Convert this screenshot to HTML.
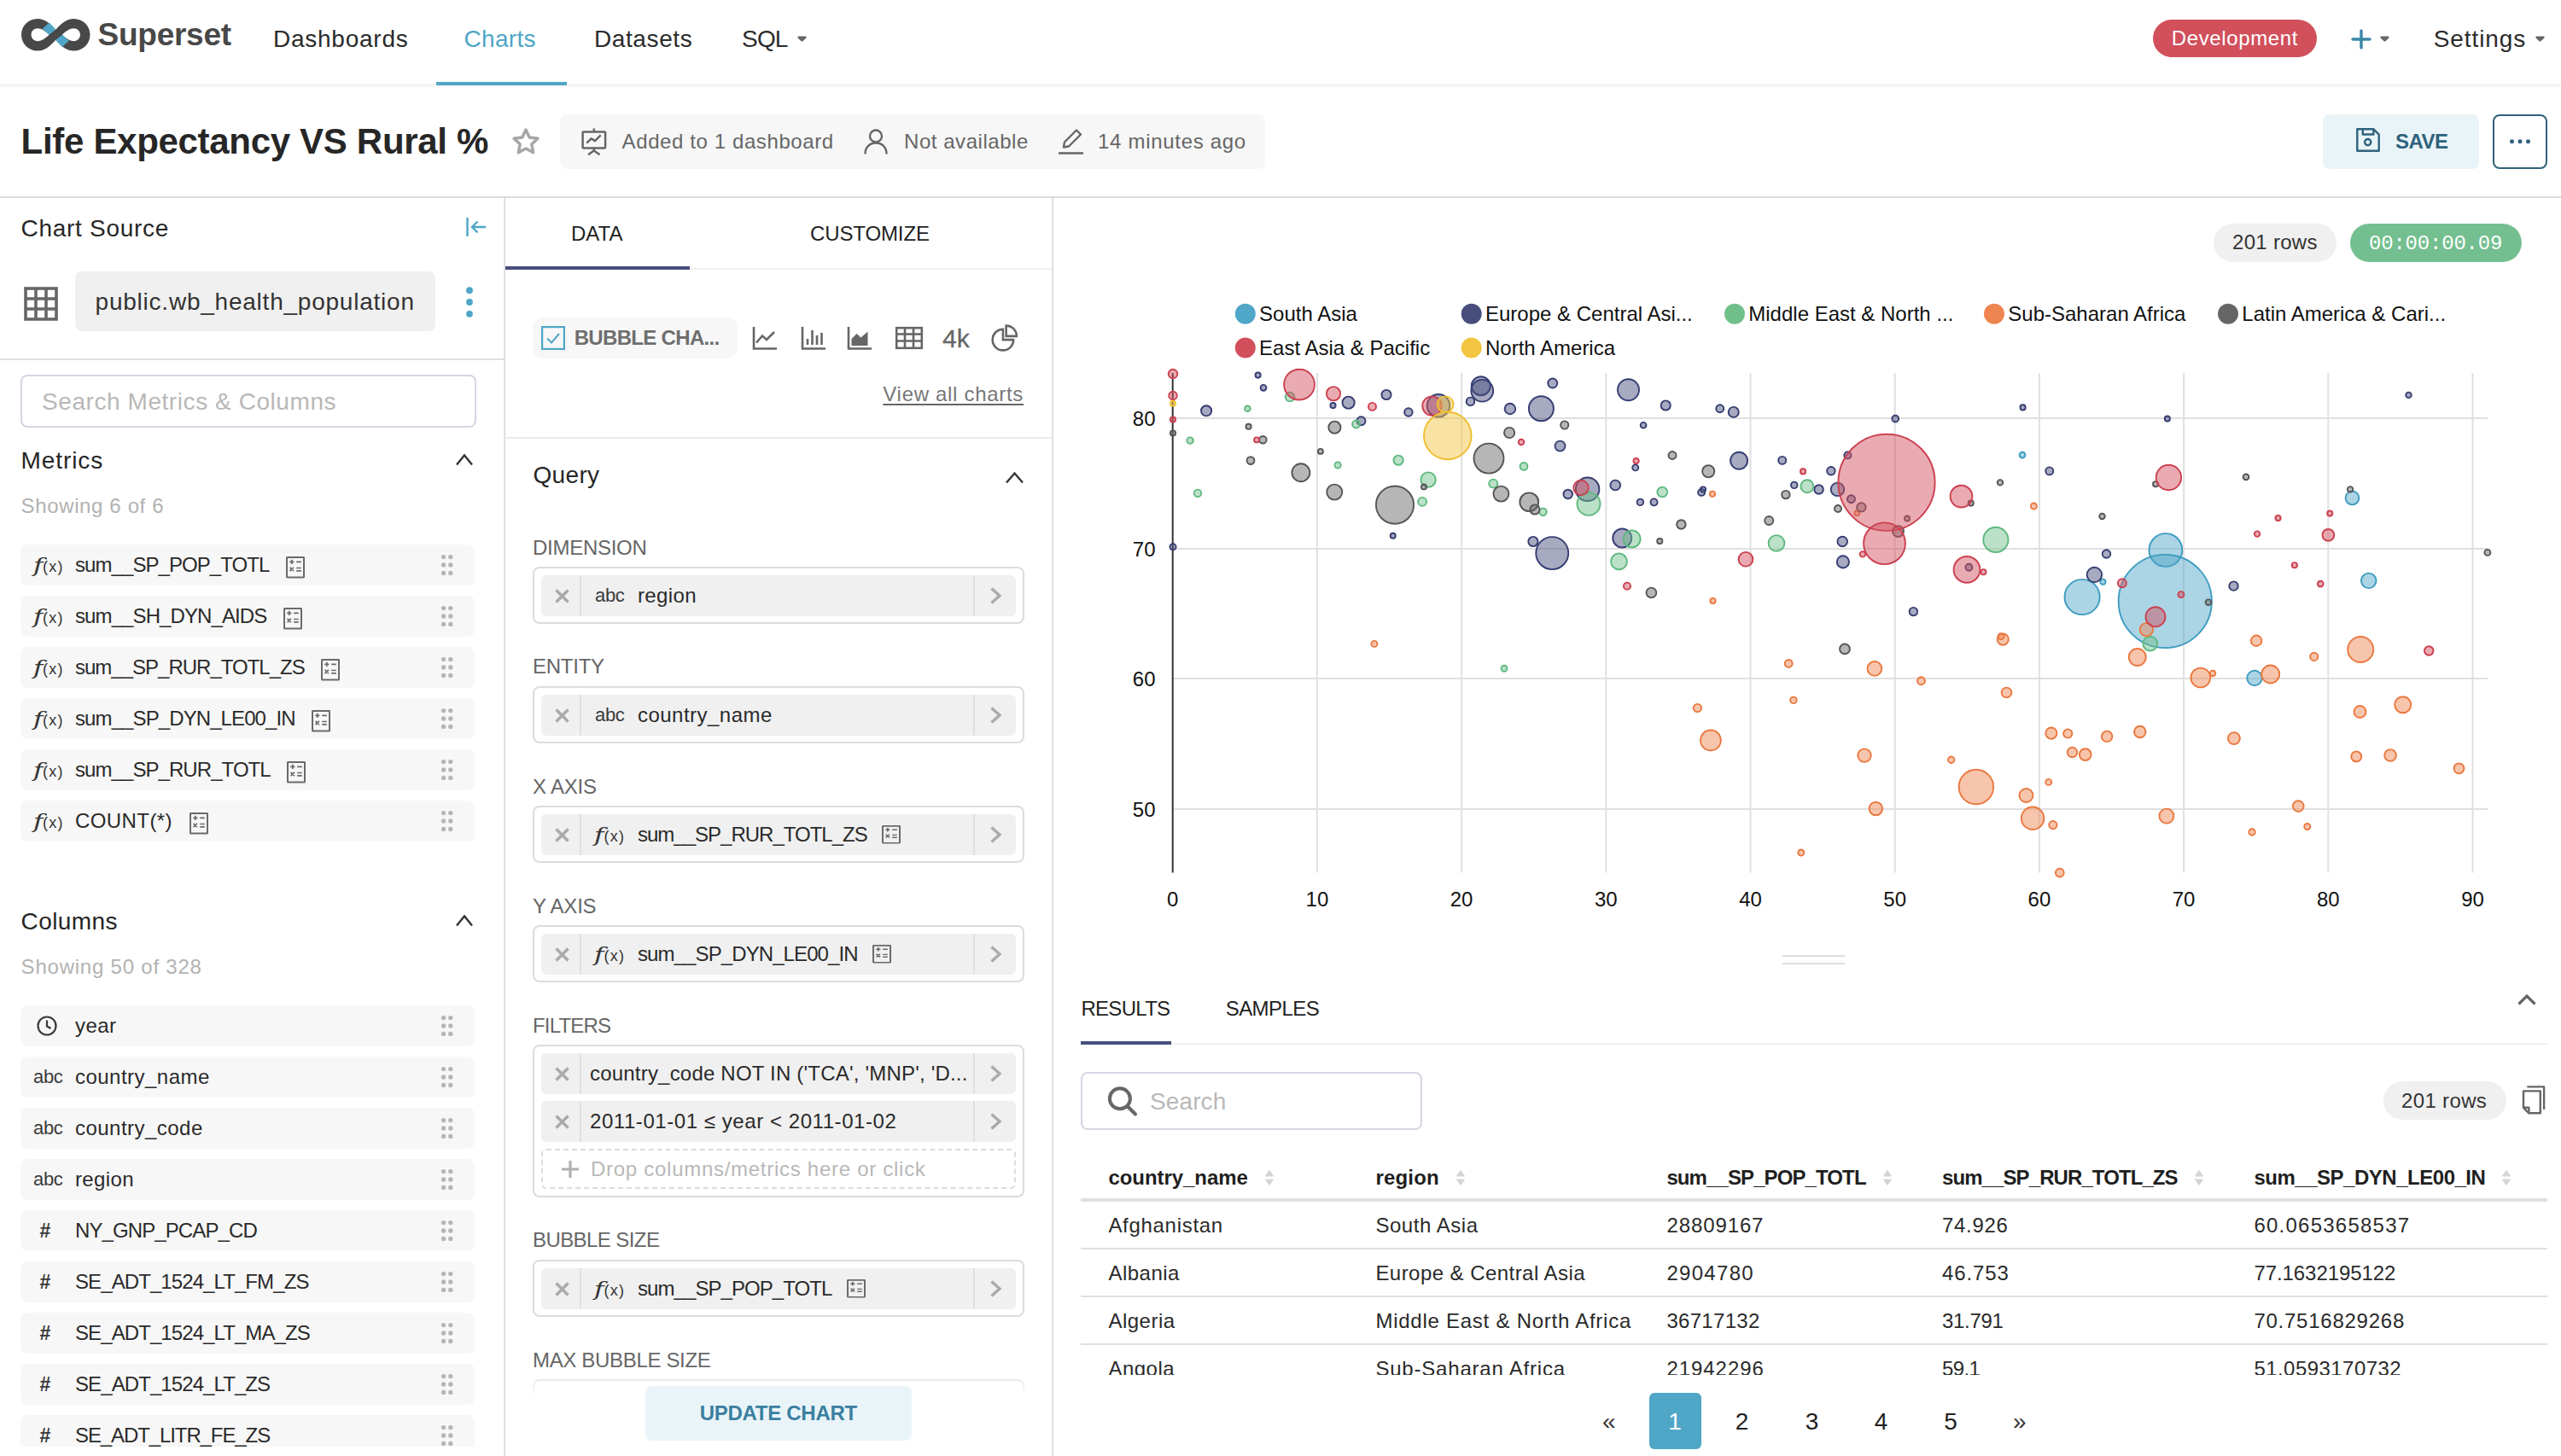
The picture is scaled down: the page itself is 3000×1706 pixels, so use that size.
<!DOCTYPE html><html><head><meta charset="utf-8"><title>Life Expectancy VS Rural %</title><style>
*{box-sizing:border-box;margin:0;padding:0}
html,body{width:3000px;height:1706px;overflow:hidden;background:#fff}
body{font-family:"Liberation Sans",sans-serif;color:#1f1f1f;position:relative}
.a{position:absolute}
.t{position:absolute;white-space:nowrap;height:40px;line-height:40px}
.f24{font-size:24px}.f28{font-size:28px}
.b{font-weight:bold}
.g6{color:#666}
.item{position:absolute;left:24px;width:532px;height:48px;background:#f7f7f7;border-radius:8px}
.item .lbl{position:absolute;left:64px;top:4px;height:40px;line-height:40px;font-size:24px;white-space:nowrap;color:#2a2a2a}
.ctl{position:absolute;left:32px;width:576px;border:2px solid #dcdcdc;border-radius:8px;background:#fff}
.pill{position:absolute;left:8px;width:556px;height:48px;background:#f0f0f0;border-radius:6px}
.pill .x{position:absolute;left:0;top:0;width:47px;height:48px;border-right:2px solid #e0e0e0}
.pill .r{position:absolute;right:0;top:0;width:50px;height:48px;border-left:2px solid #e0e0e0}
.pill .lbl{position:absolute;top:4px;height:40px;line-height:40px;font-size:24px;white-space:nowrap;color:#2a2a2a}
.clab{position:absolute;left:32px;height:40px;line-height:40px;font-size:24px;color:#666;white-space:nowrap}
svg{position:absolute;overflow:visible}
</style></head><body>
<div class="a" style="left:0;top:0;width:3000px;height:100px;background:#fff"></div>
<div class="a" style="left:0;top:98px;width:3000px;height:4px;background:#f5f5f5"></div>
<svg style="left:24px;top:21px" width="82.5" height="39.5" viewBox="0 0 82 40" preserveAspectRatio="none">
<path d="M20 1 C9 1 1 9.5 1 20 C1 30.5 9 39 20 39 C28 39 34 34 41 26 C48 34 54 39 62 39 C73 39 81 30.500 81 20 C81 9.500 73 1 62 1 C54 1 48 6 41 14 C34 6 28 1 20 1 Z M20 12.500 C25 12.500 29 16 33.500 20 C29 24 25 27.500 20 27.500 C15.500 27.500 12.500 24 12.500 20 C12.500 16 15.500 12.500 20 12.500 Z M62 12.500 C66.500 12.500 69.500 16 69.500 20 C69.500 24 66.500 27.500 62 27.500 C57 27.500 53 24 48.500 20 C53 16 57 12.500 62 12.500 Z" fill="#484848" fill-rule="evenodd"/>
<path d="M33.500 5.500 L41 14 L33.500 20 L25.500 12.800 Z" fill="#4fa6c6"/>
<path d="M48.500 34.500 L41 26 L48.500 20 L56.500 27.200 Z" fill="#4fa6c6"/>
</svg>
<div class="t" style="top:21.0px;font-size:37px;left:114.5px;letter-spacing:-0.25px;color:#484848;font-weight:bold;">Superset</div>
<div class="t" style="top:26.0px;font-size:28px;left:320.0px;letter-spacing:0.75px;color:#2b2b2b;">Dashboards</div>
<div class="t" style="top:26.0px;font-size:28px;left:543.5px;letter-spacing:0.3px;color:#4fa6c6;">Charts</div>
<div class="a" style="left:511px;top:96px;width:153px;height:4px;background:#4fa6c6"></div>
<div class="t" style="top:26.0px;font-size:28px;left:696.0px;letter-spacing:0.6px;color:#2b2b2b;">Datasets</div>
<div class="t" style="top:26.0px;font-size:28px;left:869.0px;letter-spacing:-0.8px;color:#2b2b2b;">SQL</div>
<svg style="left:934px;top:42px" width="11" height="7" viewBox="0 0 11 7"><path d="M1.700 1.700 H9.300 L5.500 5.300 Z" fill="#666" stroke="#666" stroke-width="2.600" stroke-linejoin="round"/></svg>
<div class="a" style="left:2522px;top:23px;width:192px;height:44px;border-radius:22px;background:#d1505c"></div>
<div class="t" style="top:25.0px;font-size:24px;left:2543.7px;letter-spacing:0.63px;color:#fff;">Development</div>
<svg style="left:2754px;top:34px" width="24" height="24" viewBox="0 0 24 24" fill="none" stroke="#3a87a8" stroke-width="3.4" stroke-linecap="round"><path d="M12 2v20M2 12h20"/></svg>
<svg style="left:2788px;top:42px" width="11" height="7" viewBox="0 0 11 7"><path d="M1.700 1.700 H9.300 L5.500 5.300 Z" fill="#666" stroke="#666" stroke-width="2.600" stroke-linejoin="round"/></svg>
<div class="t" style="top:26.0px;font-size:28px;left:2850.8px;letter-spacing:0.9px;color:#2b2b2b;">Settings</div>
<svg style="left:2970px;top:42px" width="11" height="7" viewBox="0 0 11 7"><path d="M1.700 1.700 H9.300 L5.500 5.300 Z" fill="#666" stroke="#666" stroke-width="2.600" stroke-linejoin="round"/></svg>
<div class="t" style="top:146.0px;font-size:42px;left:24.6px;letter-spacing:-0.31px;color:#262626;font-weight:bold;height:60px;line-height:60px;margin-top:-10px;">Life Expectancy VS Rural %</div>
<svg style="left:600px;top:150px" width="32" height="31" viewBox="0 0 32 31" fill="none" stroke="#a6a6a6" stroke-width="3.4" stroke-linejoin="round"><path d="M16 2 L20.2 11 L30 12.300 L22.800 19 L24.700 28.800 L16 24 L7.300 28.800 L9.200 19 L2 12.300 L11.800 11 Z"/></svg>
<div class="a" style="left:656px;top:134px;width:826px;height:64px;border-radius:8px;background:#f7f7f7"></div>
<svg style="left:680px;top:150px" width="32" height="32" viewBox="0 0 32 32" fill="none" stroke="#666" stroke-width="2.5" stroke-linejoin="round"><rect x="2.6" y="4.5" width="26.500" height="19" rx="1"/><path d="M15.800 0.500v4M15.800 23.500v4M9 31.200l6.800-4.700 6.800 4.700M7.200 17.600l5.400-5.300 4.300 2.800 6.800-6.800"/></svg>
<div class="t" style="top:146.0px;font-size:24px;left:728.6px;letter-spacing:0.6px;color:#666;">Added to 1 dashboard</div>
<svg style="left:1012px;top:151px" width="28" height="30" viewBox="0 0 28 30" fill="none" stroke="#666" stroke-width="2.4"><circle cx="14" cy="8.500" r="7"/><path d="M1.500 29.500 C1.500 21 7 16.500 14 16.500 C21 16.500 26.500 21 26.500 29.500"/></svg>
<div class="t" style="top:146.0px;font-size:24px;left:1059.0px;letter-spacing:0.55px;color:#666;">Not available</div>
<svg style="left:1240px;top:151px" width="29" height="30" viewBox="0 0 29 30" fill="none" stroke="#666" stroke-width="2.4" stroke-linejoin="round"><path d="M0 28.500h29M6 21.500l1-6L21 1.500l5 5L12 20.500z"/></svg>
<div class="t" style="top:146.0px;font-size:24px;left:1286.0px;letter-spacing:0.7px;color:#666;">14 minutes ago</div>
<div class="a" style="left:2721px;top:134px;width:183px;height:64px;border-radius:8px;background:#e9f4f8"></div>
<svg style="left:2760px;top:150px" width="28" height="28" viewBox="0 0 28 28" fill="none" stroke="#2f627c" stroke-width="2.4" stroke-linejoin="round"><path d="M1.300 1.300h19.200l6.200 6.200v19.200h-25.400zM7.800 1.300v6.200h12.600V1.300"/><circle cx="13.700" cy="16.600" r="3.600"/></svg>
<div class="t" style="top:146.0px;font-size:24px;left:2806.0px;letter-spacing:-0.5px;color:#2f627c;font-weight:bold;">SAVE</div>
<div class="a" style="left:2920px;top:134px;width:64px;height:64px;border-radius:8px;border:2px solid #2f627c;background:#fff"></div>
<svg style="left:2940px;top:163px" width="26" height="6" viewBox="0 0 26 6" fill="#2f627c"><circle cx="2.500" cy="2.800" r="2.500"/><circle cx="12" cy="2.800" r="2.500"/><circle cx="21.500" cy="2.800" r="2.500"/></svg>
<div class="a" style="left:0;top:230px;width:3000px;height:2px;background:#dcdcdc"></div>
<div class="a" style="left:0;top:232px;width:592px;height:1474px;border-right:2px solid #e0e0e0;overflow:hidden" id="left">
<div class="t" style="top:16.0px;font-size:28px;left:24.6px;letter-spacing:0.71px;color:#262626;">Chart Source</div>
<svg style="left:546px;top:23px" width="23" height="22" viewBox="0 0 23 22" fill="none" stroke="#4fa6c6" stroke-width="2.4"><path d="M1.500 0v22M23 11H7M13.500 4.500L7 11l6.500 6.500"/></svg>
<svg style="left:28px;top:104px" width="40" height="40" viewBox="0 0 40 40" fill="none" stroke="#666" stroke-width="3.6"><rect x="2" y="2" width="36" height="36"/><path d="M2 14h36M2 26h36M14 2v36M26 2v36"/></svg>
<div class="a" style="left:88px;top:86px;width:422px;height:70px;border-radius:8px;background:#f0f0f0"></div>
<div class="t" style="top:102.0px;font-size:28px;left:111.6px;letter-spacing:0.77px;color:#333;">public.wb_health_population</div>
<svg style="left:544px;top:104px" width="12" height="36" viewBox="0 0 12 36" fill="#4fa6c6"><circle cx="6" cy="4.2" r="3.9"/><circle cx="6" cy="18" r="3.9"/><circle cx="6" cy="31.8" r="3.9"/></svg>
<div class="a" style="left:0;top:188px;width:590px;height:2px;background:#e0e0e0"></div>
<div class="a" style="left:24px;top:207px;width:534px;height:62px;border-radius:8px;border:2px solid #d5d6e2;background:#fff"></div>
<div class="t" style="top:219.0px;font-size:28px;left:49.0px;letter-spacing:0.57px;color:#b8b8b8;">Search Metrics &amp; Columns</div>
<div class="t" style="top:288.0px;font-size:28px;left:24.6px;letter-spacing:0.9px;color:#262626;">Metrics</div>
<svg style="left:534px;top:300px" width="20" height="13" viewBox="0 0 20 13" fill="none" stroke="#333" stroke-width="2.4"><path d="M1 12.5 L10.0 1.5 L19 12.5"/></svg>
<div class="t" style="top:341.0px;font-size:24px;left:24.6px;letter-spacing:0.63px;color:#b2b2b2;">Showing 6 of 6</div>
<div class="item" style="top:406px"><div class="lbl" style="letter-spacing:-0.93px">sum__SP_POP_TOTL</div></div>
<div class="a" style="left:40.5px;top:410px;height:40px;line-height:40px;white-space:nowrap;color:#333"><span style="font-family:'DejaVu Serif',serif;font-style:italic;font-size:23px;display:inline-block;transform:scaleX(1.35);transform-origin:0 50%;margin-right:3px;margin-left:-2px">f</span><span style="font-size:18px;letter-spacing:1.3px;position:relative;top:0px">(x)</span></div>
<svg style="left:335.06375px;top:419.6px" width="22" height="25.600" viewBox="0 0 22 25.600" fill="none" stroke="#6a6a6a" stroke-width="2"><rect x="1" y="1" width="20" height="23.600" rx="0.500"/><path d="M4.200 6.300h5.200M6.800 3.700v5.200M12.200 6.300h5.600M4.600 12.800l4.400 4.400M9 12.800l-4.400 4.400M12.200 13.500h5.600M12.200 16.800h5.600" stroke-width="1.700"/></svg>
<svg style="left:516px;top:417px" width="16" height="26" viewBox="0 0 16 26" fill="#b6b6b6"><circle cx="3.6" cy="3.6" r="2.700"/><circle cx="11.8" cy="3.6" r="2.700"/><circle cx="3.6" cy="13" r="2.700"/><circle cx="11.8" cy="13" r="2.700"/><circle cx="3.6" cy="22.4" r="2.700"/><circle cx="11.8" cy="22.4" r="2.700"/></svg>
<div class="item" style="top:466px"><div class="lbl" style="letter-spacing:-0.9px">sum__SH_DYN_AIDS</div></div>
<div class="a" style="left:40.5px;top:470px;height:40px;line-height:40px;white-space:nowrap;color:#333"><span style="font-family:'DejaVu Serif',serif;font-style:italic;font-size:23px;display:inline-block;transform:scaleX(1.35);transform-origin:0 50%;margin-right:3px;margin-left:-2px">f</span><span style="font-size:18px;letter-spacing:1.3px;position:relative;top:0px">(x)</span></div>
<svg style="left:331.965625px;top:479.6px" width="22" height="25.600" viewBox="0 0 22 25.600" fill="none" stroke="#6a6a6a" stroke-width="2"><rect x="1" y="1" width="20" height="23.600" rx="0.500"/><path d="M4.200 6.300h5.200M6.800 3.700v5.200M12.200 6.300h5.600M4.600 12.800l4.400 4.400M9 12.800l-4.400 4.400M12.200 13.500h5.600M12.200 16.800h5.600" stroke-width="1.700"/></svg>
<svg style="left:516px;top:477px" width="16" height="26" viewBox="0 0 16 26" fill="#b6b6b6"><circle cx="3.6" cy="3.6" r="2.700"/><circle cx="11.8" cy="3.6" r="2.700"/><circle cx="3.6" cy="13" r="2.700"/><circle cx="11.8" cy="13" r="2.700"/><circle cx="3.6" cy="22.4" r="2.700"/><circle cx="11.8" cy="22.4" r="2.700"/></svg>
<div class="item" style="top:526px"><div class="lbl" style="letter-spacing:-1.0px">sum__SP_RUR_TOTL_ZS</div></div>
<div class="a" style="left:40.5px;top:530px;height:40px;line-height:40px;white-space:nowrap;color:#333"><span style="font-family:'DejaVu Serif',serif;font-style:italic;font-size:23px;display:inline-block;transform:scaleX(1.35);transform-origin:0 50%;margin-right:3px;margin-left:-2px">f</span><span style="font-size:18px;letter-spacing:1.3px;position:relative;top:0px">(x)</span></div>
<svg style="left:376.240625px;top:539.6px" width="22" height="25.600" viewBox="0 0 22 25.600" fill="none" stroke="#6a6a6a" stroke-width="2"><rect x="1" y="1" width="20" height="23.600" rx="0.500"/><path d="M4.200 6.300h5.200M6.800 3.700v5.200M12.200 6.300h5.600M4.600 12.800l4.400 4.400M9 12.800l-4.400 4.400M12.200 13.500h5.600M12.200 16.800h5.600" stroke-width="1.700"/></svg>
<svg style="left:516px;top:537px" width="16" height="26" viewBox="0 0 16 26" fill="#b6b6b6"><circle cx="3.6" cy="3.6" r="2.700"/><circle cx="11.8" cy="3.6" r="2.700"/><circle cx="3.6" cy="13" r="2.700"/><circle cx="11.8" cy="13" r="2.700"/><circle cx="3.6" cy="22.4" r="2.700"/><circle cx="11.8" cy="22.4" r="2.700"/></svg>
<div class="item" style="top:586px"><div class="lbl" style="letter-spacing:-0.9px">sum__SP_DYN_LE00_IN</div></div>
<div class="a" style="left:40.5px;top:590px;height:40px;line-height:40px;white-space:nowrap;color:#333"><span style="font-family:'DejaVu Serif',serif;font-style:italic;font-size:23px;display:inline-block;transform:scaleX(1.35);transform-origin:0 50%;margin-right:3px;margin-left:-2px">f</span><span style="font-size:18px;letter-spacing:1.3px;position:relative;top:0px">(x)</span></div>
<svg style="left:365.3125px;top:599.6px" width="22" height="25.600" viewBox="0 0 22 25.600" fill="none" stroke="#6a6a6a" stroke-width="2"><rect x="1" y="1" width="20" height="23.600" rx="0.500"/><path d="M4.200 6.300h5.200M6.800 3.700v5.200M12.200 6.300h5.600M4.600 12.800l4.400 4.400M9 12.800l-4.400 4.400M12.200 13.500h5.600M12.200 16.800h5.600" stroke-width="1.700"/></svg>
<svg style="left:516px;top:597px" width="16" height="26" viewBox="0 0 16 26" fill="#b6b6b6"><circle cx="3.6" cy="3.6" r="2.700"/><circle cx="11.8" cy="3.6" r="2.700"/><circle cx="3.6" cy="13" r="2.700"/><circle cx="11.8" cy="13" r="2.700"/><circle cx="3.6" cy="22.4" r="2.700"/><circle cx="11.8" cy="22.4" r="2.700"/></svg>
<div class="item" style="top:646px"><div class="lbl" style="letter-spacing:-0.93px">sum__SP_RUR_TOTL</div></div>
<div class="a" style="left:40.5px;top:650px;height:40px;line-height:40px;white-space:nowrap;color:#333"><span style="font-family:'DejaVu Serif',serif;font-style:italic;font-size:23px;display:inline-block;transform:scaleX(1.35);transform-origin:0 50%;margin-right:3px;margin-left:-2px">f</span><span style="font-size:18px;letter-spacing:1.3px;position:relative;top:0px">(x)</span></div>
<svg style="left:336.345px;top:659.6px" width="22" height="25.600" viewBox="0 0 22 25.600" fill="none" stroke="#6a6a6a" stroke-width="2"><rect x="1" y="1" width="20" height="23.600" rx="0.500"/><path d="M4.200 6.300h5.200M6.800 3.700v5.200M12.200 6.300h5.600M4.600 12.800l4.400 4.400M9 12.800l-4.400 4.400M12.200 13.500h5.600M12.200 16.800h5.600" stroke-width="1.700"/></svg>
<svg style="left:516px;top:657px" width="16" height="26" viewBox="0 0 16 26" fill="#b6b6b6"><circle cx="3.6" cy="3.6" r="2.700"/><circle cx="11.8" cy="3.6" r="2.700"/><circle cx="3.6" cy="13" r="2.700"/><circle cx="11.8" cy="13" r="2.700"/><circle cx="3.6" cy="22.4" r="2.700"/><circle cx="11.8" cy="22.4" r="2.700"/></svg>
<div class="item" style="top:706px"><div class="lbl" style="letter-spacing:0.42px">COUNT(*)</div></div>
<div class="a" style="left:40.5px;top:710px;height:40px;line-height:40px;white-space:nowrap;color:#333"><span style="font-family:'DejaVu Serif',serif;font-style:italic;font-size:23px;display:inline-block;transform:scaleX(1.35);transform-origin:0 50%;margin-right:3px;margin-left:-2px">f</span><span style="font-size:18px;letter-spacing:1.3px;position:relative;top:0px">(x)</span></div>
<svg style="left:221.61624999999998px;top:719.6px" width="22" height="25.600" viewBox="0 0 22 25.600" fill="none" stroke="#6a6a6a" stroke-width="2"><rect x="1" y="1" width="20" height="23.600" rx="0.500"/><path d="M4.200 6.300h5.200M6.800 3.700v5.200M12.200 6.300h5.600M4.600 12.800l4.400 4.400M9 12.800l-4.400 4.400M12.200 13.500h5.600M12.200 16.800h5.600" stroke-width="1.700"/></svg>
<svg style="left:516px;top:717px" width="16" height="26" viewBox="0 0 16 26" fill="#b6b6b6"><circle cx="3.6" cy="3.6" r="2.700"/><circle cx="11.8" cy="3.6" r="2.700"/><circle cx="3.6" cy="13" r="2.700"/><circle cx="11.8" cy="13" r="2.700"/><circle cx="3.6" cy="22.4" r="2.700"/><circle cx="11.8" cy="22.4" r="2.700"/></svg>
<div class="t" style="top:828.0px;font-size:28px;left:24.6px;letter-spacing:0.41px;color:#262626;">Columns</div>
<svg style="left:534px;top:840px" width="20" height="13" viewBox="0 0 20 13" fill="none" stroke="#333" stroke-width="2.4"><path d="M1 12.5 L10.0 1.5 L19 12.5"/></svg>
<div class="t" style="top:881.0px;font-size:24px;left:24.6px;letter-spacing:0.78px;color:#b2b2b2;">Showing 50 of 328</div>
<div class="item" style="top:946px"><div class="lbl" style="letter-spacing:0.4px">year</div></div>
<svg style="left:43px;top:958px" width="24" height="24" viewBox="0 0 24 24" fill="none" stroke="#3a3a3a" stroke-width="2.2"><circle cx="12" cy="12" r="10.500"/><path d="M12 5.500V12.500l4.500 2.500"/></svg>
<svg style="left:516px;top:957px" width="16" height="26" viewBox="0 0 16 26" fill="#b6b6b6"><circle cx="3.6" cy="3.6" r="2.700"/><circle cx="11.8" cy="3.6" r="2.700"/><circle cx="3.6" cy="13" r="2.700"/><circle cx="11.8" cy="13" r="2.700"/><circle cx="3.6" cy="22.4" r="2.700"/><circle cx="11.8" cy="22.4" r="2.700"/></svg>
<div class="item" style="top:1006px"><div class="lbl" style="letter-spacing:0.47px">country_name</div></div>
<div class="t" style="top:1010.0px;font-size:22px;left:39.0px;letter-spacing:-0.3px;color:#3a3a3a;">abc</div>
<svg style="left:516px;top:1017px" width="16" height="26" viewBox="0 0 16 26" fill="#b6b6b6"><circle cx="3.6" cy="3.6" r="2.700"/><circle cx="11.8" cy="3.6" r="2.700"/><circle cx="3.6" cy="13" r="2.700"/><circle cx="11.8" cy="13" r="2.700"/><circle cx="3.6" cy="22.4" r="2.700"/><circle cx="11.8" cy="22.4" r="2.700"/></svg>
<div class="item" style="top:1066px"><div class="lbl" style="letter-spacing:0.47px">country_code</div></div>
<div class="t" style="top:1070.0px;font-size:22px;left:39.0px;letter-spacing:-0.3px;color:#3a3a3a;">abc</div>
<svg style="left:516px;top:1077px" width="16" height="26" viewBox="0 0 16 26" fill="#b6b6b6"><circle cx="3.6" cy="3.6" r="2.700"/><circle cx="11.8" cy="3.6" r="2.700"/><circle cx="3.6" cy="13" r="2.700"/><circle cx="11.8" cy="13" r="2.700"/><circle cx="3.6" cy="22.4" r="2.700"/><circle cx="11.8" cy="22.4" r="2.700"/></svg>
<div class="item" style="top:1126px"><div class="lbl" style="letter-spacing:0.38px">region</div></div>
<div class="t" style="top:1130.0px;font-size:22px;left:39.0px;letter-spacing:-0.3px;color:#3a3a3a;">abc</div>
<svg style="left:516px;top:1137px" width="16" height="26" viewBox="0 0 16 26" fill="#b6b6b6"><circle cx="3.6" cy="3.6" r="2.700"/><circle cx="11.8" cy="3.6" r="2.700"/><circle cx="3.6" cy="13" r="2.700"/><circle cx="11.8" cy="13" r="2.700"/><circle cx="3.6" cy="22.4" r="2.700"/><circle cx="11.8" cy="22.4" r="2.700"/></svg>
<div class="item" style="top:1186px"><div class="lbl" style="letter-spacing:-0.9px">NY_GNP_PCAP_CD</div></div>
<div class="t" style="top:1190.0px;font-size:23px;left:46.5px;color:#3a3a3a;font-weight:bold;">#</div>
<svg style="left:516px;top:1197px" width="16" height="26" viewBox="0 0 16 26" fill="#b6b6b6"><circle cx="3.6" cy="3.6" r="2.700"/><circle cx="11.8" cy="3.6" r="2.700"/><circle cx="3.6" cy="13" r="2.700"/><circle cx="11.8" cy="13" r="2.700"/><circle cx="3.6" cy="22.4" r="2.700"/><circle cx="11.8" cy="22.4" r="2.700"/></svg>
<div class="item" style="top:1246px"><div class="lbl" style="letter-spacing:-0.91px">SE_ADT_1524_LT_FM_ZS</div></div>
<div class="t" style="top:1250.0px;font-size:23px;left:46.5px;color:#3a3a3a;font-weight:bold;">#</div>
<svg style="left:516px;top:1257px" width="16" height="26" viewBox="0 0 16 26" fill="#b6b6b6"><circle cx="3.6" cy="3.6" r="2.700"/><circle cx="11.8" cy="3.6" r="2.700"/><circle cx="3.6" cy="13" r="2.700"/><circle cx="11.8" cy="13" r="2.700"/><circle cx="3.6" cy="22.4" r="2.700"/><circle cx="11.8" cy="22.4" r="2.700"/></svg>
<div class="item" style="top:1306px"><div class="lbl" style="letter-spacing:-0.91px">SE_ADT_1524_LT_MA_ZS</div></div>
<div class="t" style="top:1310.0px;font-size:23px;left:46.5px;color:#3a3a3a;font-weight:bold;">#</div>
<svg style="left:516px;top:1317px" width="16" height="26" viewBox="0 0 16 26" fill="#b6b6b6"><circle cx="3.6" cy="3.6" r="2.700"/><circle cx="11.8" cy="3.6" r="2.700"/><circle cx="3.6" cy="13" r="2.700"/><circle cx="11.8" cy="13" r="2.700"/><circle cx="3.6" cy="22.4" r="2.700"/><circle cx="11.8" cy="22.4" r="2.700"/></svg>
<div class="item" style="top:1366px"><div class="lbl" style="letter-spacing:-0.91px">SE_ADT_1524_LT_ZS</div></div>
<div class="t" style="top:1370.0px;font-size:23px;left:46.5px;color:#3a3a3a;font-weight:bold;">#</div>
<svg style="left:516px;top:1377px" width="16" height="26" viewBox="0 0 16 26" fill="#b6b6b6"><circle cx="3.6" cy="3.6" r="2.700"/><circle cx="11.8" cy="3.6" r="2.700"/><circle cx="3.6" cy="13" r="2.700"/><circle cx="11.8" cy="13" r="2.700"/><circle cx="3.6" cy="22.4" r="2.700"/><circle cx="11.8" cy="22.4" r="2.700"/></svg>
<div class="item" style="top:1426px"><div class="lbl" style="letter-spacing:-1.1px">SE_ADT_LITR_FE_ZS</div></div>
<div class="t" style="top:1430.0px;font-size:23px;left:46.5px;color:#3a3a3a;font-weight:bold;">#</div>
<svg style="left:516px;top:1437px" width="16" height="26" viewBox="0 0 16 26" fill="#b6b6b6"><circle cx="3.6" cy="3.6" r="2.700"/><circle cx="11.8" cy="3.6" r="2.700"/><circle cx="3.6" cy="13" r="2.700"/><circle cx="11.8" cy="13" r="2.700"/><circle cx="3.6" cy="22.4" r="2.700"/><circle cx="11.8" cy="22.4" r="2.700"/></svg>
<div class="a" style="left:0;top:1463px;width:590px;height:11px;background:#fff"></div>
</div>
<div class="a" style="left:592px;top:232px;width:642px;height:1474px;border-right:2px solid #e0e0e0;overflow:hidden" id="center">
<div class="t" style="top:22.0px;font-size:24px;left:77.0px;color:#1f1f1f;">DATA</div>
<div class="t" style="top:22.0px;font-size:24px;left:357.0px;letter-spacing:-0.12px;color:#1f1f1f;">CUSTOMIZE</div>
<div class="a" style="left:0;top:82px;width:640px;height:2px;background:#f0f0f0"></div>
<div class="a" style="left:0;top:80px;width:216px;height:4px;background:#484e7d"></div>
<div class="a" style="left:32px;top:140px;width:240px;height:48px;border-radius:12px;background:#f7f7f7"></div>
<svg style="left:42px;top:150px" width="28" height="28" viewBox="0 0 28 28" fill="none" stroke="#4fa6c6" stroke-width="2.2"><rect x="1.100" y="1.100" width="25.800" height="25.800"/><path d="M7 14.500l5 5 9-10.500" stroke-width="2"/></svg>
<div class="t" style="top:144.0px;font-size:24px;left:80.7px;letter-spacing:-0.68px;color:#6e6e6e;font-weight:bold;">BUBBLE CHA...</div>
<svg style="left:289px;top:149px" width="30" height="30" viewBox="0 0 30 30" fill="none" stroke="#666" stroke-width="2.6" ><path d="M2 2v25.500h27M5 20.500l7-8 5 4.500 9-9"/></svg>
<svg style="left:346px;top:149px" width="30" height="30" viewBox="0 0 30 30" fill="none" stroke="#666" stroke-width="2.6" ><path d="M2 2v25.500h27"/><path d="M8 23V16M13.500 23V6M19 23V12M24.500 23V9" stroke-width="2.6"/></svg>
<svg style="left:400px;top:149px" width="30" height="30" viewBox="0 0 30 30" fill="none" stroke="#666" stroke-width="2.6" ><path d="M2 2v25.500h27"/><path d="M5.500 24V16l6-6 5 4.500 8-7V24z" fill="#666" stroke="none"/></svg>
<svg style="left:457px;top:149px" width="32" height="30" viewBox="0 0 32 30" fill="none" stroke="#666" stroke-width="2.6" ><rect x="1.200" y="3.200" width="29.600" height="23.600"/><path d="M1 10.500h30M1 18.500h30M11 3v24M21 3v24"/></svg>
<div class="t" style="top:145.0px;font-size:30px;left:512.0px;color:#666;-webkit-text-stroke:0.3px #666;">4k</div>
<svg style="left:568px;top:148px" width="33" height="32" viewBox="0 0 31 30" fill="none" stroke="#666" stroke-width="2.400"><path d="M14 5.500A11.500 11.500 0 1 0 25.500 17H14z"/><path d="M17.500 1.500v11.500h11.500A11.500 11.500 0 0 0 17.500 1.500z"/></svg>
<div class="t" style="top:210.0px;font-size:24px;right:33.0px;letter-spacing:0.69px;color:#777;"><span style="text-decoration:underline;text-underline-offset:3px;text-decoration-thickness:2px;text-decoration-color:#666">View all charts</span></div>
<div class="a" style="left:0;top:280px;width:640px;height:2px;background:#ebebeb"></div>
<div class="t" style="top:304.5px;font-size:28px;left:32.5px;letter-spacing:0.33px;color:#262626;">Query</div>
<svg style="left:586px;top:321px" width="21" height="13" viewBox="0 0 21 13" fill="none" stroke="#333" stroke-width="2.4"><path d="M1 12.5 L10.5 1.5 L20 12.5"/></svg>
<div class="clab" style="top:390px;letter-spacing:-0.28px">DIMENSION</div>
<div class="ctl" style="top:432px;height:67px"><div class="pill" style="top:8px"><div class="x"><svg style="left:16px;top:15.5px" width="17" height="17" viewBox="0 0 17 17" fill="none" stroke="#aaaaaa" stroke-width="3.4"><path d="M1.500 1.500l14 14M15.500 1.500l-14 14"/></svg></div><div class="r"><svg style="left:18px;top:14px" width="13" height="20" viewBox="0 0 13 20" fill="none" stroke="#aaaaaa" stroke-width="3.4"><path d="M1.500 1.500l9.500 8.500-9.500 8.500"/></svg></div><div class="lbl" style="left:63px;font-size:22px;letter-spacing:-0.3px;color:#3a3a3a">abc</div><div class="lbl" style="left:113px;letter-spacing:0.38px">region</div></div></div>
<div class="clab" style="top:529px;letter-spacing:-0.26px">ENTITY</div>
<div class="ctl" style="top:572px;height:67px"><div class="pill" style="top:8px"><div class="x"><svg style="left:16px;top:15.5px" width="17" height="17" viewBox="0 0 17 17" fill="none" stroke="#aaaaaa" stroke-width="3.4"><path d="M1.500 1.500l14 14M15.500 1.500l-14 14"/></svg></div><div class="r"><svg style="left:18px;top:14px" width="13" height="20" viewBox="0 0 13 20" fill="none" stroke="#aaaaaa" stroke-width="3.4"><path d="M1.500 1.500l9.500 8.500-9.500 8.500"/></svg></div><div class="lbl" style="left:63px;font-size:22px;letter-spacing:-0.3px;color:#3a3a3a">abc</div><div class="lbl" style="left:113px;letter-spacing:0.47px">country_name</div></div></div>
<div class="clab" style="top:669.5px;letter-spacing:-0.2px">X AXIS</div>
<div class="ctl" style="top:712px;height:67px"><div class="pill" style="top:8px"><div class="x"><svg style="left:16px;top:15.5px" width="17" height="17" viewBox="0 0 17 17" fill="none" stroke="#aaaaaa" stroke-width="3.4"><path d="M1.500 1.500l14 14M15.500 1.500l-14 14"/></svg></div><div class="r"><svg style="left:18px;top:14px" width="13" height="20" viewBox="0 0 13 20" fill="none" stroke="#aaaaaa" stroke-width="3.4"><path d="M1.500 1.500l9.500 8.500-9.500 8.500"/></svg></div><div class="lbl" style="left:64px;color:#333"><span style="font-family:'DejaVu Serif',serif;font-style:italic;font-size:23px;display:inline-block;transform:scaleX(1.35);transform-origin:0 50%;margin-right:3px;margin-left:-2px">f</span><span style="font-size:18px;letter-spacing:1.3px;position:relative;top:0px">(x)</span></div><div class="lbl" style="left:113px;letter-spacing:-1.0px">sum__SP_RUR_TOTL_ZS</div><svg style="left:398.6px;top:13.200px" width="22" height="21.600" viewBox="0 0 22 25.600" preserveAspectRatio="none" fill="none" stroke="#6a6a6a" stroke-width="2"><rect x="1" y="1" width="20" height="23.600" rx="0.500"/><path d="M4.200 6.300h5.200M6.800 3.700v5.200M12.200 6.300h5.600M4.600 12.800l4.400 4.400M9 12.800l-4.400 4.400M12.200 13.500h5.600M12.200 16.800h5.600" stroke-width="1.700"/></svg></div></div>
<div class="clab" style="top:809.5px;letter-spacing:-0.2px">Y AXIS</div>
<div class="ctl" style="top:852px;height:67px"><div class="pill" style="top:8px"><div class="x"><svg style="left:16px;top:15.5px" width="17" height="17" viewBox="0 0 17 17" fill="none" stroke="#aaaaaa" stroke-width="3.4"><path d="M1.500 1.500l14 14M15.500 1.500l-14 14"/></svg></div><div class="r"><svg style="left:18px;top:14px" width="13" height="20" viewBox="0 0 13 20" fill="none" stroke="#aaaaaa" stroke-width="3.4"><path d="M1.500 1.500l9.500 8.500-9.500 8.500"/></svg></div><div class="lbl" style="left:64px;color:#333"><span style="font-family:'DejaVu Serif',serif;font-style:italic;font-size:23px;display:inline-block;transform:scaleX(1.35);transform-origin:0 50%;margin-right:3px;margin-left:-2px">f</span><span style="font-size:18px;letter-spacing:1.3px;position:relative;top:0px">(x)</span></div><div class="lbl" style="left:113px;letter-spacing:-0.9px">sum__SP_DYN_LE00_IN</div><svg style="left:387.7px;top:13.200px" width="22" height="21.600" viewBox="0 0 22 25.600" preserveAspectRatio="none" fill="none" stroke="#6a6a6a" stroke-width="2"><rect x="1" y="1" width="20" height="23.600" rx="0.500"/><path d="M4.200 6.300h5.200M6.800 3.700v5.200M12.200 6.300h5.600M4.600 12.800l4.400 4.400M9 12.800l-4.400 4.400M12.200 13.500h5.600M12.200 16.800h5.600" stroke-width="1.700"/></svg></div></div>
<div class="clab" style="top:949.5px;letter-spacing:-0.83px">FILTERS</div>
<div class="ctl" style="top:992px;height:179px"><div class="pill" style="top:8px"><div class="x"><svg style="left:16px;top:15.5px" width="17" height="17" viewBox="0 0 17 17" fill="none" stroke="#aaaaaa" stroke-width="3.4"><path d="M1.500 1.500l14 14M15.500 1.500l-14 14"/></svg></div><div class="r"><svg style="left:18px;top:14px" width="13" height="20" viewBox="0 0 13 20" fill="none" stroke="#aaaaaa" stroke-width="3.4"><path d="M1.500 1.500l9.500 8.500-9.500 8.500"/></svg></div><div class="lbl" style="left:57px;letter-spacing:0.2px">country_code NOT IN ('TCA', 'MNP', 'D...</div></div><div class="pill" style="top:64px"><div class="x"><svg style="left:16px;top:15.5px" width="17" height="17" viewBox="0 0 17 17" fill="none" stroke="#aaaaaa" stroke-width="3.4"><path d="M1.500 1.500l14 14M15.500 1.500l-14 14"/></svg></div><div class="r"><svg style="left:18px;top:14px" width="13" height="20" viewBox="0 0 13 20" fill="none" stroke="#aaaaaa" stroke-width="3.4"><path d="M1.500 1.500l9.500 8.500-9.500 8.500"/></svg></div><div class="lbl" style="left:57px;letter-spacing:0.56px">2011-01-01 ≤ year &lt; 2011-01-02</div></div><div class="a" style="left:8px;top:120px;width:556px;height:47px;border:2px dashed #dcdcdc;border-radius:6px"></div><svg style="left:32px;top:134px" width="20" height="20" viewBox="0 0 20 20" fill="none" stroke="#b0b0b0" stroke-width="3.2"><path d="M10 0v20M0 10h20"/></svg><div class="lbl a" style="left:66px;top:124px;height:40px;line-height:40px;font-size:24px;letter-spacing:0.72px;color:#b8b8b8;white-space:nowrap">Drop columns/metrics here or click</div></div>
<div class="clab" style="top:1201px;letter-spacing:-0.58px">BUBBLE SIZE</div>
<div class="ctl" style="top:1244px;height:67px"><div class="pill" style="top:8px"><div class="x"><svg style="left:16px;top:15.5px" width="17" height="17" viewBox="0 0 17 17" fill="none" stroke="#aaaaaa" stroke-width="3.4"><path d="M1.500 1.500l14 14M15.500 1.500l-14 14"/></svg></div><div class="r"><svg style="left:18px;top:14px" width="13" height="20" viewBox="0 0 13 20" fill="none" stroke="#aaaaaa" stroke-width="3.4"><path d="M1.500 1.500l9.500 8.500-9.500 8.500"/></svg></div><div class="lbl" style="left:64px;color:#333"><span style="font-family:'DejaVu Serif',serif;font-style:italic;font-size:23px;display:inline-block;transform:scaleX(1.35);transform-origin:0 50%;margin-right:3px;margin-left:-2px">f</span><span style="font-size:18px;letter-spacing:1.3px;position:relative;top:0px">(x)</span></div><div class="lbl" style="left:113px;letter-spacing:-0.93px">sum__SP_POP_TOTL</div><svg style="left:357.5px;top:13.200px" width="22" height="21.600" viewBox="0 0 22 25.600" preserveAspectRatio="none" fill="none" stroke="#6a6a6a" stroke-width="2"><rect x="1" y="1" width="20" height="23.600" rx="0.500"/><path d="M4.200 6.300h5.200M6.800 3.700v5.200M12.200 6.300h5.600M4.600 12.800l4.400 4.400M9 12.800l-4.400 4.400M12.200 13.500h5.600M12.200 16.800h5.600" stroke-width="1.700"/></svg></div></div>
<div class="clab" style="top:1341.5px;letter-spacing:-0.33px">MAX BUBBLE SIZE</div>
<div class="ctl" style="top:1384px;height:67px"></div>
<div class="a" style="left:0;top:1372px;width:640px;height:32px;background:linear-gradient(rgba(255,255,255,0),#fff)"></div>
<div class="a" style="left:0;top:1404px;width:640px;height:70px;background:#fff"></div>
<div class="a" style="left:164px;top:1392px;width:312px;height:64px;border-radius:8px;background:#e9f4f8"></div>
<div class="t" style="top:1404.0px;font-size:24px;left:227.7px;letter-spacing:-0.28px;color:#3a7fa0;font-weight:bold;">UPDATE CHART</div>
</div>
<div class="a" style="left:2593px;top:262px;width:144px;height:45px;border-radius:23px;background:#f0f0f0"></div>
<div class="t" style="top:263.5px;font-size:24px;left:2615.0px;letter-spacing:0.3px;color:#333;">201 rows</div>
<div class="a" style="left:2753px;top:262px;width:201px;height:45px;border-radius:23px;background:#74bf8f"></div>
<div class="t" style="top:265.5px;font-size:24px;left:2775.0px;letter-spacing:-0.2px;color:#fff;font-family:'Liberation Mono',monospace;">00:00:00.09</div>
<svg style="left:1234px;top:232px" width="1766" height="900" viewBox="1234 232 1766 900"><line x1="1542.9" y1="437" x2="1542.9" y2="1022.6" stroke="#e0e0e0" stroke-width="2"/><line x1="1712.1" y1="437" x2="1712.1" y2="1022.6" stroke="#e0e0e0" stroke-width="2"/><line x1="1881.3" y1="437" x2="1881.3" y2="1022.6" stroke="#e0e0e0" stroke-width="2"/><line x1="2050.5" y1="437" x2="2050.5" y2="1022.6" stroke="#e0e0e0" stroke-width="2"/><line x1="2219.7" y1="437" x2="2219.7" y2="1022.6" stroke="#e0e0e0" stroke-width="2"/><line x1="2388.9" y1="437" x2="2388.9" y2="1022.6" stroke="#e0e0e0" stroke-width="2"/><line x1="2558.1" y1="437" x2="2558.1" y2="1022.6" stroke="#e0e0e0" stroke-width="2"/><line x1="2727.3" y1="437" x2="2727.3" y2="1022.6" stroke="#e0e0e0" stroke-width="2"/><line x1="2896.5" y1="437" x2="2896.5" y2="1022.6" stroke="#e0e0e0" stroke-width="2"/><line x1="1374" y1="490" x2="2914" y2="490" stroke="#e0e0e0" stroke-width="2"/><line x1="1374" y1="643" x2="2914" y2="643" stroke="#e0e0e0" stroke-width="2"/><line x1="1374" y1="795" x2="2914" y2="795" stroke="#e0e0e0" stroke-width="2"/><line x1="1374" y1="948" x2="2914" y2="948" stroke="#e0e0e0" stroke-width="2"/><line x1="1373.700" y1="437" x2="1373.700" y2="1022.600" stroke="#333" stroke-width="2"/><g font-family="Liberation Sans, sans-serif" font-size="24" fill="#111"><text x="1353.500" y="498.6" text-anchor="end">80</text><text x="1353.500" y="651.6" text-anchor="end">70</text><text x="1353.500" y="803.6" text-anchor="end">60</text><text x="1353.500" y="956.6" text-anchor="end">50</text><text x="1373.7" y="1061.600" text-anchor="middle">0</text><text x="1542.9" y="1061.600" text-anchor="middle">10</text><text x="1712.1" y="1061.600" text-anchor="middle">20</text><text x="1881.3" y="1061.600" text-anchor="middle">30</text><text x="2050.5" y="1061.600" text-anchor="middle">40</text><text x="2219.7" y="1061.600" text-anchor="middle">50</text><text x="2388.9" y="1061.600" text-anchor="middle">60</text><text x="2558.1" y="1061.600" text-anchor="middle">70</text><text x="2727.3" y="1061.600" text-anchor="middle">80</text><text x="2896.5" y="1061.600" text-anchor="middle">90</text><circle cx="1458.8" cy="367.8" r="12" fill="#4fa6c6"/><text x="1475.1" y="376.3">South Asia</text><circle cx="1723.7" cy="367.8" r="12" fill="#474e7b"/><text x="1740.0" y="376.3">Europe &amp; Central Asi...</text><circle cx="2032" cy="367.8" r="12" fill="#70c08c"/><text x="2048.3" y="376.3">Middle East &amp; North ...</text><circle cx="2336" cy="367.8" r="12" fill="#ee8550"/><text x="2352.3" y="376.3">Sub-Saharan Africa</text><circle cx="2610" cy="367.8" r="12" fill="#666666"/><text x="2626.3" y="376.3">Latin America &amp; Cari...</text><circle cx="1458.8" cy="407.5" r="12" fill="#d1505c"/><text x="1475.1" y="416.0">East Asia &amp; Pacific</text><circle cx="1723.7" cy="407.5" r="12" fill="#f3c540"/><text x="1740.0" y="416.0">North America</text></g><g fill="#4fa6c6" fill-opacity="0.48" stroke="#3d9cc0" stroke-width="1.9"><circle cx="2369" cy="533.1" r="3.4"/><circle cx="2755.5" cy="583.4" r="7.9"/><circle cx="2463.4" cy="681.75" r="3.1"/><circle cx="2439.1" cy="699.5" r="20.6"/><circle cx="2536.9" cy="644.5" r="19.4"/><circle cx="2536.25" cy="704.5" r="54.6"/><circle cx="2774.75" cy="680.4" r="8.75"/><circle cx="2641" cy="794.5" r="8.75"/></g><g fill="#474e7b" fill-opacity="0.48" stroke="#363d72" stroke-width="1.9"><circle cx="1473.6" cy="439.6" r="3.1"/><circle cx="1480" cy="454.3" r="3.4"/><circle cx="1413.1" cy="481.3" r="6.1"/><circle cx="1561.5" cy="475.1" r="3.1"/><circle cx="1579.6" cy="471.75" r="7.1"/><circle cx="1624" cy="462.5" r="5.6"/><circle cx="1649.9" cy="483" r="4.75"/><circle cx="1594.5" cy="493.25" r="5"/><circle cx="1685" cy="475.3" r="13.3"/><circle cx="1734.75" cy="452.25" r="11"/><circle cx="1736.25" cy="457.75" r="12.9"/><circle cx="1722.5" cy="470.4" r="4.75"/><circle cx="1818.75" cy="449" r="5.5"/><circle cx="1768.9" cy="479" r="6.25"/><circle cx="1805.4" cy="478.75" r="14.5"/><circle cx="1907.5" cy="456.75" r="12.5"/><circle cx="1951.25" cy="475" r="5.6"/><circle cx="1827.5" cy="522.6" r="6"/><circle cx="1925.1" cy="498.25" r="3.4"/><circle cx="1915.75" cy="547.9" r="3.5"/><circle cx="1836.75" cy="579" r="5.25"/><circle cx="1859.6" cy="573.25" r="13.75"/><circle cx="1892.25" cy="568.5" r="5.9"/><circle cx="1921.4" cy="588.4" r="3.75"/><circle cx="1937.5" cy="588.4" r="4"/><circle cx="1993.1" cy="576.9" r="4"/><circle cx="1995" cy="573.5" r="3.1"/><circle cx="2014.75" cy="478.75" r="4.5"/><circle cx="2030.75" cy="482.9" r="6"/><circle cx="2220.25" cy="490.6" r="3.9"/><circle cx="2037.1" cy="539.75" r="10"/><circle cx="2087.75" cy="539.4" r="4.5"/><circle cx="2144.9" cy="551.75" r="4.75"/><circle cx="2164.4" cy="533.5" r="4.1"/><circle cx="2101.75" cy="568.4" r="3.75"/><circle cx="2130.6" cy="573.5" r="5.25"/><circle cx="2152.5" cy="573.4" r="7.75"/><circle cx="2168.5" cy="584.75" r="4.5"/><circle cx="2369.6" cy="477.4" r="3.1"/><circle cx="2538.9" cy="490.6" r="3.1"/><circle cx="2400.75" cy="551.9" r="4.5"/><circle cx="2821.5" cy="462.9" r="3.25"/><circle cx="1374" cy="640.75" r="3.6"/><circle cx="1631.75" cy="627.75" r="3"/><circle cx="1795.9" cy="634.5" r="5.6"/><circle cx="1818.25" cy="648.1" r="19"/><circle cx="1900.25" cy="630.5" r="11"/><circle cx="2158.25" cy="634.5" r="5.75"/><circle cx="2158.9" cy="658.4" r="7.1"/><circle cx="2306.4" cy="664.75" r="4"/><circle cx="2241.4" cy="716.6" r="4.75"/><circle cx="2467.5" cy="649" r="4.75"/><circle cx="2453.4" cy="673.5" r="8.75"/><circle cx="2616.5" cy="686.6" r="5.25"/></g><g fill="#70c08c" fill-opacity="0.48" stroke="#5fb87f" stroke-width="1.9"><circle cx="1511" cy="465.1" r="5.3"/><circle cx="1461.4" cy="478.8" r="3.3"/><circle cx="1394.1" cy="516.1" r="3.75"/><circle cx="1403" cy="577.9" r="4.25"/><circle cx="1588.6" cy="497" r="4.5"/><circle cx="1567.1" cy="545" r="3.6"/><circle cx="1638.1" cy="539.25" r="5.6"/><circle cx="1673.1" cy="562.1" r="8.75"/><circle cx="1666.1" cy="587.9" r="5"/><circle cx="1785" cy="546.4" r="4.4"/><circle cx="1749.25" cy="566.6" r="5"/><circle cx="1807.5" cy="599.75" r="4.25"/><circle cx="1861" cy="590.4" r="13.5"/><circle cx="1947.25" cy="576.5" r="5.9"/><circle cx="2116.9" cy="569.75" r="7.5"/><circle cx="1911.6" cy="631.4" r="10"/><circle cx="1896.5" cy="657.9" r="9.4"/><circle cx="1762" cy="783.25" r="3.5"/><circle cx="2081" cy="636.5" r="9.4"/><circle cx="2337.9" cy="632.4" r="14.6"/><circle cx="2518.75" cy="754.1" r="8.4"/></g><g fill="#ee8550" fill-opacity="0.48" stroke="#ea7840" stroke-width="1.9"><circle cx="2006" cy="578.75" r="3.1"/><circle cx="2175.25" cy="601.25" r="2.9"/><circle cx="2382.4" cy="593" r="3.5"/><circle cx="1609.9" cy="754.4" r="3.5"/><circle cx="2006.5" cy="704" r="3.1"/><circle cx="2095.25" cy="777.4" r="4.4"/><circle cx="2195.9" cy="783.4" r="8.4"/><circle cx="2514.4" cy="737.6" r="7.75"/><circle cx="2503.75" cy="770" r="10"/><circle cx="2346.25" cy="749.1" r="6.6"/><circle cx="2344" cy="745.75" r="3.5"/><circle cx="2577.8" cy="794" r="11.4"/><circle cx="2592.1" cy="789" r="3.25"/><circle cx="2643.1" cy="750.75" r="6.25"/><circle cx="2710.75" cy="769.4" r="4.6"/><circle cx="2765.25" cy="761" r="15"/><circle cx="2659.7" cy="790" r="10.5"/><circle cx="1988.4" cy="829.5" r="4.6"/><circle cx="2003.9" cy="867.4" r="11.9"/><circle cx="2100.9" cy="820.4" r="3.75"/><circle cx="2184" cy="885.1" r="7.75"/><circle cx="2197.4" cy="947.5" r="7.75"/><circle cx="2250.5" cy="797.75" r="4.5"/><circle cx="2350.5" cy="811.5" r="5.9"/><circle cx="2402.9" cy="859.1" r="6.6"/><circle cx="2422.25" cy="859.5" r="5.1"/><circle cx="2468.1" cy="862.9" r="6.25"/><circle cx="2506.75" cy="857.5" r="6.75"/><circle cx="2427.5" cy="881.5" r="5.75"/><circle cx="2442.75" cy="884.1" r="6.9"/><circle cx="2285.75" cy="890.25" r="3.75"/><circle cx="2314.9" cy="922" r="20.25"/><circle cx="2373.5" cy="932" r="8"/><circle cx="2399.75" cy="916.4" r="3.5"/><circle cx="2381.1" cy="958.75" r="13.25"/><circle cx="2404.9" cy="966.6" r="4.6"/><circle cx="2537.9" cy="956.1" r="8.5"/><circle cx="2764.5" cy="834" r="7"/><circle cx="2814.75" cy="825.75" r="9.5"/><circle cx="2616.9" cy="865.1" r="7"/><circle cx="2760.25" cy="886.5" r="6"/><circle cx="2800.1" cy="885" r="6.9"/><circle cx="2880.5" cy="900.4" r="5.9"/><circle cx="2692.25" cy="944.6" r="6.4"/><circle cx="2702.75" cy="968.5" r="3.5"/><circle cx="2638" cy="975" r="3.75"/><circle cx="2109.8" cy="999" r="3.5"/><circle cx="2412.8" cy="1022.6" r="4.9"/></g><g fill="#666666" fill-opacity="0.48" stroke="#555555" stroke-width="1.9"><circle cx="1462.6" cy="499.8" r="3.1"/><circle cx="1374" cy="507.5" r="3.1"/><circle cx="1479.4" cy="515.3" r="4.25"/><circle cx="1465" cy="539.6" r="4.4"/><circle cx="1523.9" cy="553.75" r="10.5"/><circle cx="1546.9" cy="528.9" r="3"/><circle cx="1563.4" cy="500.75" r="7.1"/><circle cx="1563.25" cy="576.6" r="9"/><circle cx="1634" cy="591.6" r="22.1"/><circle cx="1668" cy="570.4" r="3"/><circle cx="1832.75" cy="498" r="4.6"/><circle cx="1768.1" cy="507" r="6.1"/><circle cx="1744" cy="537.1" r="17.5"/><circle cx="1959" cy="533.5" r="4.5"/><circle cx="1758.4" cy="578.6" r="9"/><circle cx="1791.25" cy="588.25" r="10.9"/><circle cx="1797.9" cy="597" r="5.6"/><circle cx="2001.25" cy="552.25" r="7.1"/><circle cx="2091.9" cy="579.6" r="4.75"/><circle cx="2153" cy="596" r="4"/><circle cx="2180.4" cy="594.4" r="5.25"/><circle cx="2234.1" cy="607.5" r="3"/><circle cx="2308.75" cy="589.6" r="3.1"/><circle cx="2072.25" cy="610" r="5"/><circle cx="2343" cy="565.4" r="3.25"/><circle cx="2462.5" cy="605" r="3.25"/><circle cx="2525.1" cy="567.25" r="3.1"/><circle cx="2631" cy="558.9" r="3.4"/><circle cx="2753.1" cy="573.4" r="3.25"/><circle cx="1944.25" cy="634.1" r="3.1"/><circle cx="1969.4" cy="614.5" r="5.25"/><circle cx="1934.4" cy="694.5" r="5.9"/><circle cx="2223.5" cy="622.6" r="6.5"/><circle cx="2161" cy="760.4" r="5.9"/><circle cx="2587" cy="705.75" r="3.4"/><circle cx="2913.9" cy="647.4" r="3.5"/></g><g fill="#d1505c" fill-opacity="0.48" stroke="#cc4050" stroke-width="1.9"><circle cx="1374" cy="438.1" r="5.3"/><circle cx="1522" cy="450.6" r="17.9"/><circle cx="1374" cy="463.5" r="4.8"/><circle cx="1374" cy="491.5" r="3.1"/><circle cx="1472.1" cy="515.4" r="3"/><circle cx="1562" cy="461.25" r="8.1"/><circle cx="1607.5" cy="476.4" r="4.5"/><circle cx="1677.5" cy="475.6" r="11.25"/><circle cx="1782" cy="518" r="3.25"/><circle cx="1916.6" cy="540.1" r="3.1"/><circle cx="1852" cy="571.5" r="8.75"/><circle cx="2112.1" cy="552.4" r="3.1"/><circle cx="2210" cy="565.3" r="56.6"/><circle cx="2297.5" cy="581.6" r="12.9"/><circle cx="2540.4" cy="559.5" r="14.75"/><circle cx="2729.25" cy="601.6" r="3.1"/><circle cx="2668.6" cy="607.1" r="3.1"/><circle cx="1906" cy="686.75" r="4.1"/><circle cx="2045" cy="655.25" r="8.4"/><circle cx="2181.9" cy="649.4" r="3.25"/><circle cx="2207.5" cy="636.75" r="24.4"/><circle cx="2304" cy="667.4" r="15.4"/><circle cx="2323.4" cy="670.25" r="3.1"/><circle cx="2485.9" cy="683.25" r="5"/><circle cx="2554.9" cy="696.6" r="3.5"/><circle cx="2525" cy="722.75" r="11.5"/><circle cx="2644.1" cy="625.6" r="3.25"/><circle cx="2727.4" cy="626.9" r="6.9"/><circle cx="2687.9" cy="662.25" r="3.1"/><circle cx="2718.25" cy="684.1" r="3.4"/><circle cx="2845.25" cy="762.5" r="5.25"/></g><g fill="#f3c540" fill-opacity="0.48" stroke="#f0bd30" stroke-width="1.9"><circle cx="1374" cy="472.8" r="3"/><circle cx="1693.1" cy="473.75" r="9.4"/><circle cx="1695.8" cy="510.5" r="27.8"/></g></svg>
<div class="a" style="left:2088px;top:1119px;width:73px;height:2px;background:#dedede"></div>
<div class="a" style="left:2088px;top:1128px;width:73px;height:2px;background:#dedede"></div>
<div class="t" style="top:1161.5px;font-size:24px;left:1266.4px;letter-spacing:-0.7px;color:#1f1f1f;">RESULTS</div>
<div class="t" style="top:1161.5px;font-size:24px;left:1435.7px;letter-spacing:-0.55px;color:#1f1f1f;">SAMPLES</div>
<div class="a" style="left:1266px;top:1222px;width:1718px;height:2px;background:#f0f0f0"></div>
<div class="a" style="left:1266px;top:1220px;width:106px;height:4px;background:#484e7d"></div>
<svg style="left:2949px;top:1164px" width="22" height="14" viewBox="0 0 22 14" fill="none" stroke="#666" stroke-width="3.2"><path d="M1.500 12.500L11 3l9.500 9.500"/></svg>
<div class="a" style="left:1266px;top:1256px;width:400px;height:68px;border-radius:8px;border:2px solid #d5d6e2;background:#fff"></div>
<svg style="left:1297px;top:1274px" width="36" height="36" viewBox="0 0 36 36" fill="none" stroke="#666" stroke-width="4"><circle cx="14.900" cy="13.300" r="12"/><path d="M23.500 22L33 31.500" stroke-linecap="round"/></svg>
<div class="t" style="top:1271.0px;font-size:28px;left:1347.0px;letter-spacing:0.11px;color:#b8b8b8;">Search</div>
<div class="a" style="left:2792px;top:1267px;width:144px;height:45px;border-radius:23px;background:#f0f0f0"></div>
<div class="t" style="top:1269.5px;font-size:24px;left:2813.0px;letter-spacing:0.35px;color:#333;">201 rows</div>
<svg style="left:2954px;top:1272px" width="28" height="33" viewBox="0 0 28 33" fill="none" stroke="#666" stroke-width="2.400" stroke-linejoin="round"><path d="M6.300 1.400H26.100V28M2 6.400H21.800V32.300H8.400L2 25.800zM2 25.800H8.400V32.300"/></svg>
<div class="t" style="top:1360.0px;font-size:24px;left:1298.4px;letter-spacing:-0.05px;color:#1f1f1f;font-weight:bold;">country_name</div>
<svg style="left:1481.8312500000002px;top:1370.5px" width="10" height="18" viewBox="0 0 10 18" fill="#d4d4d4"><path d="M5 0.500l4.500 6.500h-9zM5 17.500l4.500-6.500h-9z" stroke="#d4d4d4" stroke-width="1" stroke-linejoin="round"/></svg>
<div class="t" style="top:1360.0px;font-size:24px;left:1611.4px;letter-spacing:0.2px;color:#1f1f1f;font-weight:bold;">region</div>
<svg style="left:1705.9281250000001px;top:1370.5px" width="10" height="18" viewBox="0 0 10 18" fill="#d4d4d4"><path d="M5 0.500l4.500 6.500h-9zM5 17.500l4.500-6.500h-9z" stroke="#d4d4d4" stroke-width="1" stroke-linejoin="round"/></svg>
<div class="t" style="top:1360.0px;font-size:24px;left:1952.4px;letter-spacing:-0.9px;color:#1f1f1f;font-weight:bold;">sum__SP_POP_TOTL</div>
<svg style="left:2205.65625px;top:1370.5px" width="10" height="18" viewBox="0 0 10 18" fill="#d4d4d4"><path d="M5 0.500l4.500 6.500h-9zM5 17.500l4.500-6.500h-9z" stroke="#d4d4d4" stroke-width="1" stroke-linejoin="round"/></svg>
<div class="t" style="top:1360.0px;font-size:24px;left:2275.0px;letter-spacing:-0.91px;color:#1f1f1f;font-weight:bold;">sum__SP_RUR_TOTL_ZS</div>
<svg style="left:2570.663125px;top:1370.5px" width="10" height="18" viewBox="0 0 10 18" fill="#d4d4d4"><path d="M5 0.500l4.500 6.500h-9zM5 17.500l4.500-6.500h-9z" stroke="#d4d4d4" stroke-width="1" stroke-linejoin="round"/></svg>
<div class="t" style="top:1360.0px;font-size:24px;left:2640.4px;letter-spacing:-0.48px;color:#1f1f1f;font-weight:bold;">sum__SP_DYN_LE00_IN</div>
<svg style="left:2931.405px;top:1370.5px" width="10" height="18" viewBox="0 0 10 18" fill="#d4d4d4"><path d="M5 0.500l4.500 6.500h-9zM5 17.500l4.500-6.500h-9z" stroke="#d4d4d4" stroke-width="1" stroke-linejoin="round"/></svg>
<div class="a" style="left:1266px;top:1404px;width:1718px;height:4px;background:#e0e0e0"></div>
<div class="a" style="left:1266px;top:1408px;width:1718px;height:203px;overflow:hidden">
<div class="t" style="top:7.5px;font-size:24px;left:32.4px;letter-spacing:0.7px;color:#2a2a2a;">Afghanistan</div>
<div class="t" style="top:7.5px;font-size:24px;left:345.4px;letter-spacing:0.55px;color:#2a2a2a;">South Asia</div>
<div class="t" style="top:7.5px;font-size:24px;left:686.4px;letter-spacing:0.9px;color:#2a2a2a;">28809167</div>
<div class="t" style="top:7.5px;font-size:24px;left:1009.0px;letter-spacing:0.7px;color:#2a2a2a;">74.926</div>
<div class="t" style="top:7.5px;font-size:24px;left:1374.4px;letter-spacing:1.24px;color:#2a2a2a;">60.0653658537</div>
<div class="a" style="left:0;top:54px;width:1718px;height:2px;background:#e0e0e0"></div>
<div class="t" style="top:63.5px;font-size:24px;left:32.4px;letter-spacing:0.5px;color:#2a2a2a;">Albania</div>
<div class="t" style="top:63.5px;font-size:24px;left:345.4px;letter-spacing:0.45px;color:#2a2a2a;">Europe &amp; Central Asia</div>
<div class="t" style="top:63.5px;font-size:24px;left:686.4px;letter-spacing:1.3px;color:#2a2a2a;">2904780</div>
<div class="t" style="top:63.5px;font-size:24px;left:1009.0px;letter-spacing:0.9px;color:#2a2a2a;">46.753</div>
<div class="t" style="top:63.5px;font-size:24px;left:1374.4px;letter-spacing:-0.07px;color:#2a2a2a;">77.1632195122</div>
<div class="a" style="left:0;top:110px;width:1718px;height:2px;background:#e0e0e0"></div>
<div class="t" style="top:119.5px;font-size:24px;left:32.4px;letter-spacing:0.5px;color:#2a2a2a;">Algeria</div>
<div class="t" style="top:119.5px;font-size:24px;left:345.4px;letter-spacing:0.75px;color:#2a2a2a;">Middle East &amp; North Africa</div>
<div class="t" style="top:119.5px;font-size:24px;left:686.4px;letter-spacing:0.3px;color:#2a2a2a;">36717132</div>
<div class="t" style="top:119.5px;font-size:24px;left:1009.0px;letter-spacing:-0.3px;color:#2a2a2a;">31.791</div>
<div class="t" style="top:119.5px;font-size:24px;left:1374.4px;letter-spacing:0.75px;color:#2a2a2a;">70.7516829268</div>
<div class="a" style="left:0;top:166px;width:1718px;height:2px;background:#e0e0e0"></div>
<div class="t" style="top:175.5px;font-size:24px;left:32.4px;letter-spacing:0.5px;color:#2a2a2a;">Angola</div>
<div class="t" style="top:175.5px;font-size:24px;left:345.4px;letter-spacing:0.8px;color:#2a2a2a;">Sub-Saharan Africa</div>
<div class="t" style="top:175.5px;font-size:24px;left:686.4px;letter-spacing:0.95px;color:#2a2a2a;">21942296</div>
<div class="t" style="top:175.5px;font-size:24px;left:1009.0px;letter-spacing:-0.6px;color:#2a2a2a;">59.1</div>
<div class="t" style="top:175.5px;font-size:24px;left:1374.4px;letter-spacing:0.45px;color:#2a2a2a;">51.0593170732</div>
</div>
<div class="a" style="left:1932px;top:1632px;width:61px;height:66px;border-radius:6px;background:#4fa6c6"></div>
<div class="t" style="top:1646.0px;font-size:28px;left:1877.0px;color:#333;">«</div>
<div class="t" style="top:1646.0px;font-size:28px;left:1942.0px;color:#fff;width:40px;text-align:center;">1</div>
<div class="t" style="top:1646.0px;font-size:28px;left:2020.5px;color:#1f1f1f;width:40px;text-align:center;">2</div>
<div class="t" style="top:1646.0px;font-size:28px;left:2102.5px;color:#1f1f1f;width:40px;text-align:center;">3</div>
<div class="t" style="top:1646.0px;font-size:28px;left:2183.6px;color:#1f1f1f;width:40px;text-align:center;">4</div>
<div class="t" style="top:1646.0px;font-size:28px;left:2265.0px;color:#1f1f1f;width:40px;text-align:center;">5</div>
<div class="t" style="top:1646.0px;font-size:28px;left:2358.0px;color:#333;">»</div>
</body></html>
